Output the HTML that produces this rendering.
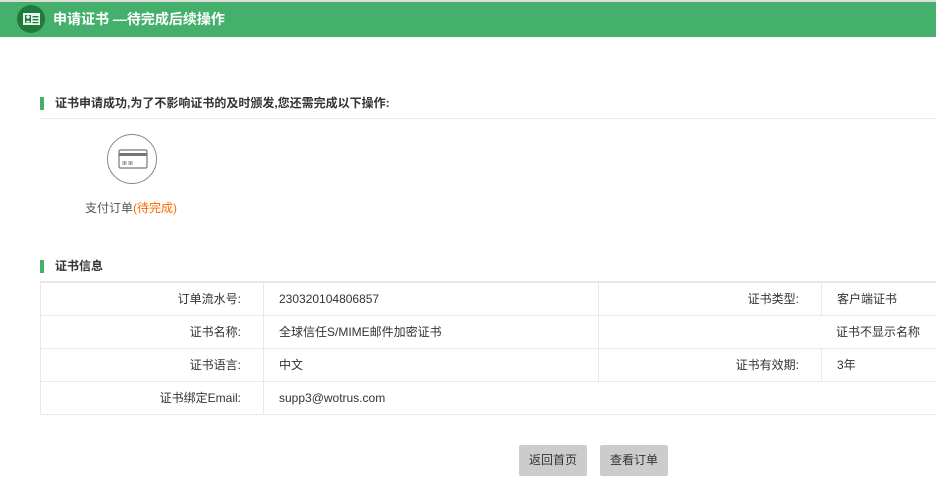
<!DOCTYPE html>
<html><head><meta charset="utf-8"><style>
*{margin:0;padding:0;box-sizing:border-box}
body{width:936px;height:481px;background:#fff;font-family:"Liberation Sans","Noto Sans CJK SC",sans-serif;font-size:12px;color:#333;position:relative;overflow:hidden}
.top{position:absolute;left:0;top:0;width:936px;height:2px;background:#ddd}
.hdr{position:absolute;left:0;top:2px;width:936px;height:35px;background:#45b06c}
.hdr .c{position:absolute;left:17px;top:3px;width:28px;height:28px;border-radius:50%;background:#1f7a3e}
.hdr .t{position:absolute;left:53px;top:9px;color:#fff;font-size:14px;font-weight:bold;line-height:16px}
.sec{position:absolute;left:40px;height:13px;border-left:4px solid #45b06c;padding-left:11px;font-weight:bold;font-size:12px;line-height:13px;color:#333}
.line{position:absolute;left:40px;top:118px;width:896px;height:1px;background:#eee}
.circ{position:absolute;left:107px;top:134px;width:50px;height:50px;border:1px solid #888;border-radius:50%}
.lbl{position:absolute;left:85px;top:199px;font-size:12px;color:#555}
.lbl span{color:#f60}
table{position:absolute;left:40px;top:281px;border-collapse:collapse;width:900px}
td{border:1px solid #e8e8e8;height:33px;padding:0;font-size:12px;color:#333}
table tr:first-child td{border-top:2px solid #e8e8e8}
.l{text-align:right;padding-right:22px}
.v{padding-left:15px}
.btn{position:absolute;top:445px;width:68px;height:31px;background:#ccc;border-radius:2px;text-align:center;line-height:31px;font-size:12px;color:#333}
</style></head><body>
<div class="top"></div>
<div class="hdr"><div class="c"><svg width="28" height="28" viewBox="0 0 28 28"><rect x="6" y="8" width="17" height="12" fill="#e8f3ec"/><rect x="8" y="10" width="6" height="8" fill="#1f7a3e"/><circle cx="11" cy="12" r="1.8" fill="#e8f3ec"/><path d="M8.5 17.5 Q11 13.5 13.5 17.5Z" fill="#e8f3ec"/><rect x="15.5" y="11" width="6" height="1.4" fill="#1f7a3e"/><rect x="15.5" y="14" width="6" height="1.4" fill="#1f7a3e"/><rect x="15.5" y="17" width="6" height="1.2" fill="#1f7a3e"/></svg></div><div class="t">申请证书 —待完成后续操作</div></div>
<div class="sec" style="top:97px">证书申请成功,为了不影响证书的及时颁发,您还需完成以下操作:</div>
<div class="line"></div>
<div class="circ"><svg width="48" height="48" viewBox="0 0 48 48"><rect x="11" y="15" width="28" height="18" rx="1.5" fill="none" stroke="#777" stroke-width="1.2"/><rect x="11" y="18" width="28" height="3" fill="#777"/><path d="M15 26v4M16.5 26v4M18 26v4M21 26v4M22.5 26v4M24 26v4" stroke="#777" stroke-width="0.8"/></svg></div>
<div class="lbl">支付订单<span>(待完成)</span></div>
<div class="sec" style="top:260px">证书信息</div>
<table>
<tr><td class="l" style="width:223px">订单流水号:</td><td class="v" style="width:335px">230320104806857</td><td class="l" style="width:223px">证书类型:</td><td class="v">客户端证书</td></tr>
<tr><td class="l">证书名称:</td><td class="v">全球信任S/MIME邮件加密证书</td><td colspan="2" style="text-align:right;padding-right:19px">证书不显示名称</td></tr>
<tr><td class="l">证书语言:</td><td class="v">中文</td><td class="l">证书有效期:</td><td class="v">3年</td></tr>
<tr><td class="l">证书绑定Email:</td><td class="v" colspan="3">supp3@wotrus.com</td></tr>
</table>
<div class="btn" style="left:519px">返回首页</div>
<div class="btn" style="left:600px">查看订单</div>
</body></html>
